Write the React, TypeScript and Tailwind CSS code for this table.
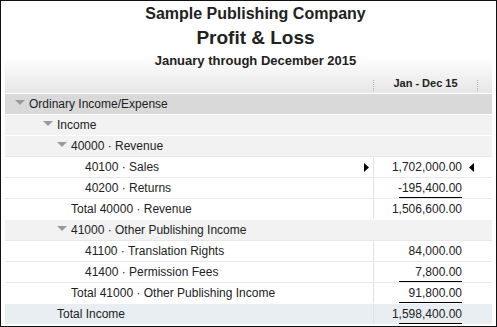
import React from "react";

type Kind = "group" | "sub" | "line" | "total";

type Row = {
  label: string;
  value?: string;
  kind: Kind;
  pl: string;
  tri?: boolean;
  underline?: boolean;
  selected?: boolean;
};

const rows: Row[] = [
  { label: "Ordinary Income/Expense", kind: "group", pl: "pl-[10px]", tri: true },
  { label: "Income", kind: "sub", pl: "pl-[38px]", tri: true },
  { label: "40000 · Revenue", kind: "sub", pl: "pl-[52px]", tri: true },
  { label: "40100 · Sales", kind: "line", pl: "pl-[80px]", value: "1,702,000.00", selected: true },
  { label: "40200 · Returns", kind: "line", pl: "pl-[80px]", value: "-195,400.00", underline: true },
  { label: "Total 40000 · Revenue", kind: "line", pl: "pl-[66px]", value: "1,506,600.00" },
  { label: "41000 · Other Publishing Income", kind: "sub", pl: "pl-[52px]", tri: true },
  { label: "41100 · Translation Rights", kind: "line", pl: "pl-[80px]", value: "84,000.00" },
  { label: "41400 · Permission Fees", kind: "line", pl: "pl-[80px]", value: "7,800.00", underline: true },
  { label: "Total 41000 · Other Publishing Income", kind: "line", pl: "pl-[66px]", value: "91,800.00", underline: true },
  { label: "Total Income", kind: "total", pl: "pl-[52px]", value: "1,598,400.00", underline: true },
];

const rowCls: Record<Kind, string> = {
  group: "bg-[#d9d9d9] border-white",
  sub: "bg-[#f2f2f2] border-white",
  line: "bg-white border-[#e8e8e8]",
  total: "bg-[#e9eef3] border-white",
};

const valCls: Record<Kind, string> = {
  group: "",
  sub: "",
  line: "border-l border-[#e2e2e2]",
  total: "border-l border-[#dde3e9]",
};

function DownTri() {
  return (
    <svg className="mt-[6px] mr-[4px] shrink-0" width="10" height="5" viewBox="0 0 10 5">
      <path d="M0 0H10L5 5Z" fill="#9b9b9b" />
    </svg>
  );
}

function RightArrow() {
  return (
    <svg width="5" height="9" viewBox="0 0 5 9">
      <path d="M0 0L5 4.5L0 9Z" fill="#000" />
    </svg>
  );
}

function LeftArrow() {
  return (
    <svg width="5" height="9" viewBox="0 0 5 9">
      <path d="M5 0L0 4.5L5 9Z" fill="#000" />
    </svg>
  );
}

function ReportRow({ r }: { r: Row }) {
  return (
    <div className={`grid h-[21px] grid-cols-[368px_104px_15px] border-t ${rowCls[r.kind]}`}>
      <div className={`flex items-start pr-[4px] ${r.pl}`}>
        {r.tri && <DownTri />}
        <span className="whitespace-nowrap leading-[20px]">{r.label}</span>
        {r.selected && (
          <span className="ml-auto flex h-full items-center">
            <RightArrow />
          </span>
        )}
      </div>
      <div className={`flex flex-col ${valCls[r.kind]}`}>
        {r.value !== undefined && (
          <div className="flex flex-1 items-center justify-end pr-[3px]">
            <span className="leading-[18px]">{r.value}</span>
            <span className="flex w-[12px] justify-end">{r.selected && <LeftArrow />}</span>
          </div>
        )}
        {r.underline && <div className="ml-[25px] h-px w-[63px] bg-black" />}
      </div>
      <div />
    </div>
  );
}

export default function App() {
  return (
    <div className="flex h-[327px] w-[497px] flex-col border border-[#111] bg-white px-[4px] pb-[2px] font-['Liberation_Sans',Arial,sans-serif] text-[12px] text-[#222]">
      <div className="flex h-[92px] flex-col bg-linear-to-b from-white from-60% to-[#e6e6e6]">
        <div className="flex flex-col items-center pl-[14px] pt-[4px] font-bold text-[#222]">
          <div className="text-[16px] leading-[18px]">Sample Publishing Company</div>
          <div className="mt-[4px] text-[19px] leading-[22px]">Profit &amp; Loss</div>
          <div className="mt-[4px] text-[13px] leading-[15px]">January through December 2015</div>
        </div>
        <div className="mt-auto grid grid-cols-[368px_104px_15px] pb-[2px]">
          <div />
          <div className="flex h-[11px] justify-center border-l border-dotted border-[#b0b0b0]">
            <span className="-mt-[2px] text-[11px] font-bold leading-[11px]">Jan - Dec 15</span>
          </div>
          <div className="h-[11px] border-l border-dotted border-[#b0b0b0]" />
        </div>
      </div>
      <div className="flex flex-col">
        {rows.map((r, i) => (
          <ReportRow key={i} r={r} />
        ))}
      </div>
    </div>
  );
}
